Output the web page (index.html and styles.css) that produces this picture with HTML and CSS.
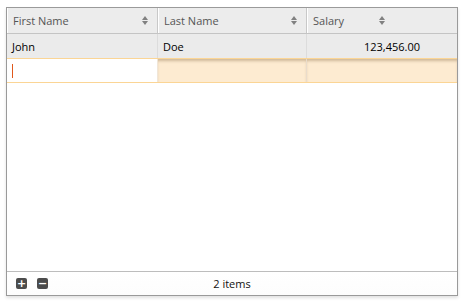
FILE: index.html
```html
<!DOCTYPE html>
<html lang="en">
<head>
    <meta charset="UTF-8">
    <title>Grid</title>
    <link rel="stylesheet" href="styles.css">
</head>
<body>
    <div class="grid">
        <!-- Cabeçalho -->
        <div class="grid-header">
            <div class="head-cell">First Name <span class="sort"></span></div>
            <div class="head-cell">Last Name <span class="sort"></span></div>
            <div class="head-cell">Salary <span class="sort"></span></div>
        </div>

        <!-- Linhas -->
        <div class="grid-row">
            <div class="cell">John</div>
            <div class="cell">Doe</div>
            <div class="cell num">123,456.00</div>
        </div>
        <div class="grid-row editing">
            <div class="cell editor"><span class="caret"></span></div>
            <div class="cell"></div>
            <div class="cell"></div>
        </div>

        <div class="grid-body"></div>

        <!-- Rodapé -->
        <div class="grid-footer">
            <div class="buttons">
                <span class="btn">+</span>
                <span class="btn">&minus;</span>
            </div>
            <span class="count">2 items</span>
        </div>
    </div>
</body>
</html>
```

FILE: styles.css
```css
body {
    margin: 0;
    padding: 7px 8px 6px 6px;
    background: #fff;
    font-family: "Open Sans", Arial, sans-serif;
    font-size: 11px;
}
.grid {
    height: 287px;
    border: 1px solid #9a9a9a;
    display: flex;
    flex-direction: column;
    box-shadow: 0 2px 3px rgba(0, 0, 0, 0.12);
}
.grid-header, .grid-row {
    display: grid;
    grid-template-columns: 151px 149px 1fr;
}
.grid-header {
    height: 25px;
    background: #ececec;
    border-bottom: 1px solid #c4c4c4;
}
.head-cell {
    display: flex;
    align-items: center;
    justify-content: space-between;
    padding: 0 8px 0 5px;
    color: #555;
    border-left: 1px solid #fff;
    border-right: 1px solid #c8c8c8;
}
.head-cell:last-child {
    border-right: none;
    padding-right: 71px;
}
.sort {
    width: 7px;
    height: 9px;
    position: relative;
}
.sort::before, .sort::after {
    content: "";
    position: absolute;
    left: 0;
    border-left: 3.5px solid transparent;
    border-right: 3.5px solid transparent;
}
.sort::before {
    top: 0;
    border-bottom: 4px solid #808080;
}
.sort::after {
    bottom: 0;
    border-top: 4px solid #808080;
}
.grid-row {
    height: 24px;
    background: #ebebeb;
}
.cell {
    display: flex;
    align-items: center;
    padding: 0 5px;
    color: #000;
    border-right: 1px solid #dcdcdc;
}
.cell:last-child {
    border-right: none;
}
.num {
    justify-content: flex-end;
    padding-right: 37px;
}
.grid-row.editing {
    height: 23px;
    background: #fdebd1;
    border-top: 1px solid #fbd595;
    border-bottom: 1px solid #fbd595;
}
.editing .cell {
    box-shadow: inset 0 3px 3px -1px rgba(120, 90, 50, 0.35);
    border-right-color: #e9dccb;
}
.editing .editor {
    background: #fff;
    box-shadow: none;
    border-right-color: #f0e6d8;
}
.caret {
    width: 1px;
    height: 14px;
    background: #e0581c;
}
.grid-body {
    flex: 1;
    background: #fff;
}
.grid-footer {
    height: 23px;
    border-top: 1px solid #bdbdbd;
    display: flex;
    align-items: center;
    position: relative;
    background: linear-gradient(#fff, #fdfdfd);
}
.buttons {
    display: flex;
    gap: 10px;
    padding-left: 9px;
}
.btn {
    width: 11px;
    height: 11px;
    border-radius: 2px;
    background: #4c4c4c;
    color: #fff;
    font: bold 11px/11px "DejaVu Sans", sans-serif;
    text-align: center;
}
.count {
    position: absolute;
    left: 0;
    right: 0;
    text-align: center;
    color: #111;
    pointer-events: none;
}
```
